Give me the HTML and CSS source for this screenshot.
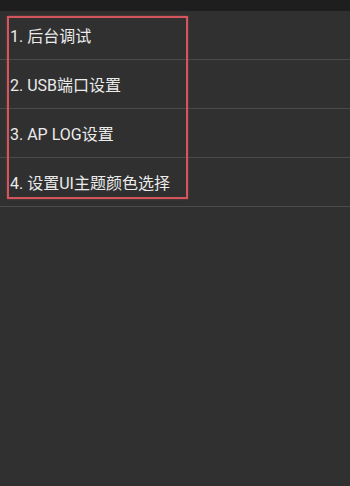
FILE: index.html
```html
<!DOCTYPE html>
<html lang="zh-CN">
<head>
  <meta charset="UTF-8">
  <meta name="viewport" content="width=device-width, initial-scale=1.0">
  <title>设置</title>
  <link rel="stylesheet" href="styles.css">
</head>
<body>

  <div class="top-bar"></div>

  <div class="menu">
    <ul class="menu-list">
      <li class="menu-item">1. 后台调试</li>
      <li class="menu-item">2. USB端口设置</li>
      <li class="menu-item">3. AP LOG设置</li>
      <li class="menu-item">4. 设置UI主题颜色选择</li>
    </ul>
    <!-- highlight box drawn over the list -->
    <div class="highlight"></div>
  </div>

</body>
</html>
```

FILE: styles.css
```css
body {
  font-family: Roboto, "Noto Sans CJK SC", sans-serif;
  margin: 0;
  background-color: #303030;
  color: #ebebeb;
  height: 486px;
  overflow: hidden;
}
.top-bar {
  height: 11px;
  background-color: #1e1e1e;
}
.menu {
  position: relative;
}
.menu-list {
  list-style: none;
  margin: 0;
  padding: 0;
}
.menu-item {
  height: 48px;
  display: flex;
  align-items: center;
  padding-left: 10px;
  font-size: 16px;
  border-bottom: 1px solid #4a4a4a;
}
.highlight {
  position: absolute;
  left: 7px;
  top: 5px;
  width: 177px;
  height: 179px;
  border: 2px solid #d2565b;
  box-shadow: 0 0 2px rgba(210, 86, 91, 0.5);
}
```
